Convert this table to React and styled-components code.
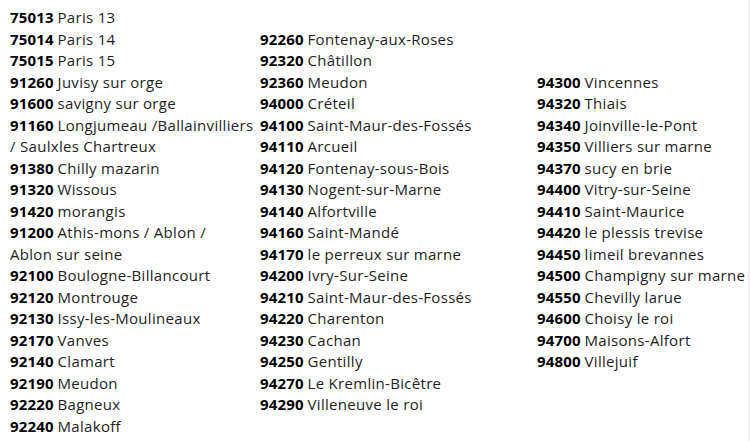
import React from 'react'
import styled, { createGlobalStyle } from 'styled-components'

const GlobalStyle = createGlobalStyle`
  body {
    margin: 0;
    background: #fff;
    font-family: "Open Sans", "Liberation Sans", sans-serif;
  }
`

// each column is a list of [code, town]; "\n" marks a hard line break
const columns = [
  [
    ['75013', 'Paris 13'],
    ['75014', 'Paris 14'],
    ['75015', 'Paris 15'],
    ['91260', 'Juvisy sur orge'],
    ['91600', 'savigny sur orge'],
    ['91160', 'Longjumeau /Ballainvilliers\n/ Saulxles Chartreux'],
    ['91380', 'Chilly mazarin'],
    ['91320', 'Wissous'],
    ['91420', 'morangis'],
    ['91200', 'Athis-mons / Ablon /\nAblon sur seine'],
    ['92100', 'Boulogne-Billancourt'],
    ['92120', 'Montrouge'],
    ['92130', 'Issy-les-Moulineaux'],
    ['92170', 'Vanves'],
    ['92140', 'Clamart'],
    ['92190', 'Meudon'],
    ['92220', 'Bagneux'],
    ['92240', 'Malakoff'],
  ],
  [
    ['92260', 'Fontenay-aux-Roses'],
    ['92320', 'Châtillon'],
    ['92360', 'Meudon'],
    ['94000', 'Créteil'],
    ['94100', 'Saint-Maur-des-Fossés'],
    ['94110', 'Arcueil'],
    ['94120', 'Fontenay-sous-Bois'],
    ['94130', 'Nogent-sur-Marne'],
    ['94140', 'Alfortville'],
    ['94160', 'Saint-Mandé'],
    ['94170', 'le perreux sur marne'],
    ['94200', 'Ivry-Sur-Seine'],
    ['94210', 'Saint-Maur-des-Fossés'],
    ['94220', 'Charenton'],
    ['94230', 'Cachan'],
    ['94250', 'Gentilly'],
    ['94270', 'Le Kremlin-Bicêtre'],
    ['94290', 'Villeneuve le roi'],
  ],
  [
    ['94300', 'Vincennes'],
    ['94320', 'Thiais'],
    ['94340', 'Joinville-le-Pont'],
    ['94350', 'Villiers sur marne'],
    ['94370', 'sucy en brie'],
    ['94400', 'Vitry-sur-Seine'],
    ['94410', 'Saint-Maurice'],
    ['94420', 'le plessis trevise'],
    ['94450', 'limeil brevannes'],
    ['94500', 'Champigny sur marne'],
    ['94550', 'Chevilly larue'],
    ['94600', 'Choisy le roi'],
    ['94700', 'Maisons-Alfort'],
    ['94800', 'Villejuif'],
  ],
]

export default function App() {
  return (
    <>
      <GlobalStyle />
      <Page>
        <Grid>
          {columns.map((col, i) => (
            <Column key={i}>
              {col.map(([code, name]) => (
                <Line key={code + name}>
                  <Code>{code}</Code> <Town>{name}</Town>
                </Line>
              ))}
            </Column>
          ))}
        </Grid>
      </Page>
    </>
  )
}

const Page = styled.div`
  width: 750px;
  height: 441px;
  box-sizing: border-box;
  border-right: 2px solid #f0f0f0;
  overflow: hidden;
`

const Grid = styled.div`
  display: grid;
  grid-template-columns: 250px 277px 1fr;
  align-items: center;
  padding: 7px 0 0 10px;
`

const Column = styled.div`
  display: flex;
  flex-direction: column;
`

const Line = styled.div`
  font-size: 15px;
  line-height: 21.5px;
  white-space: nowrap;
  color: #000;
`

const Code = styled.b`
  font-weight: 700;
  letter-spacing: 0.15px;
`

const Town = styled.span`
  font-weight: 400;
  letter-spacing: 0.3px;
  color: #1e1e1e;
  white-space: pre-line;
`
